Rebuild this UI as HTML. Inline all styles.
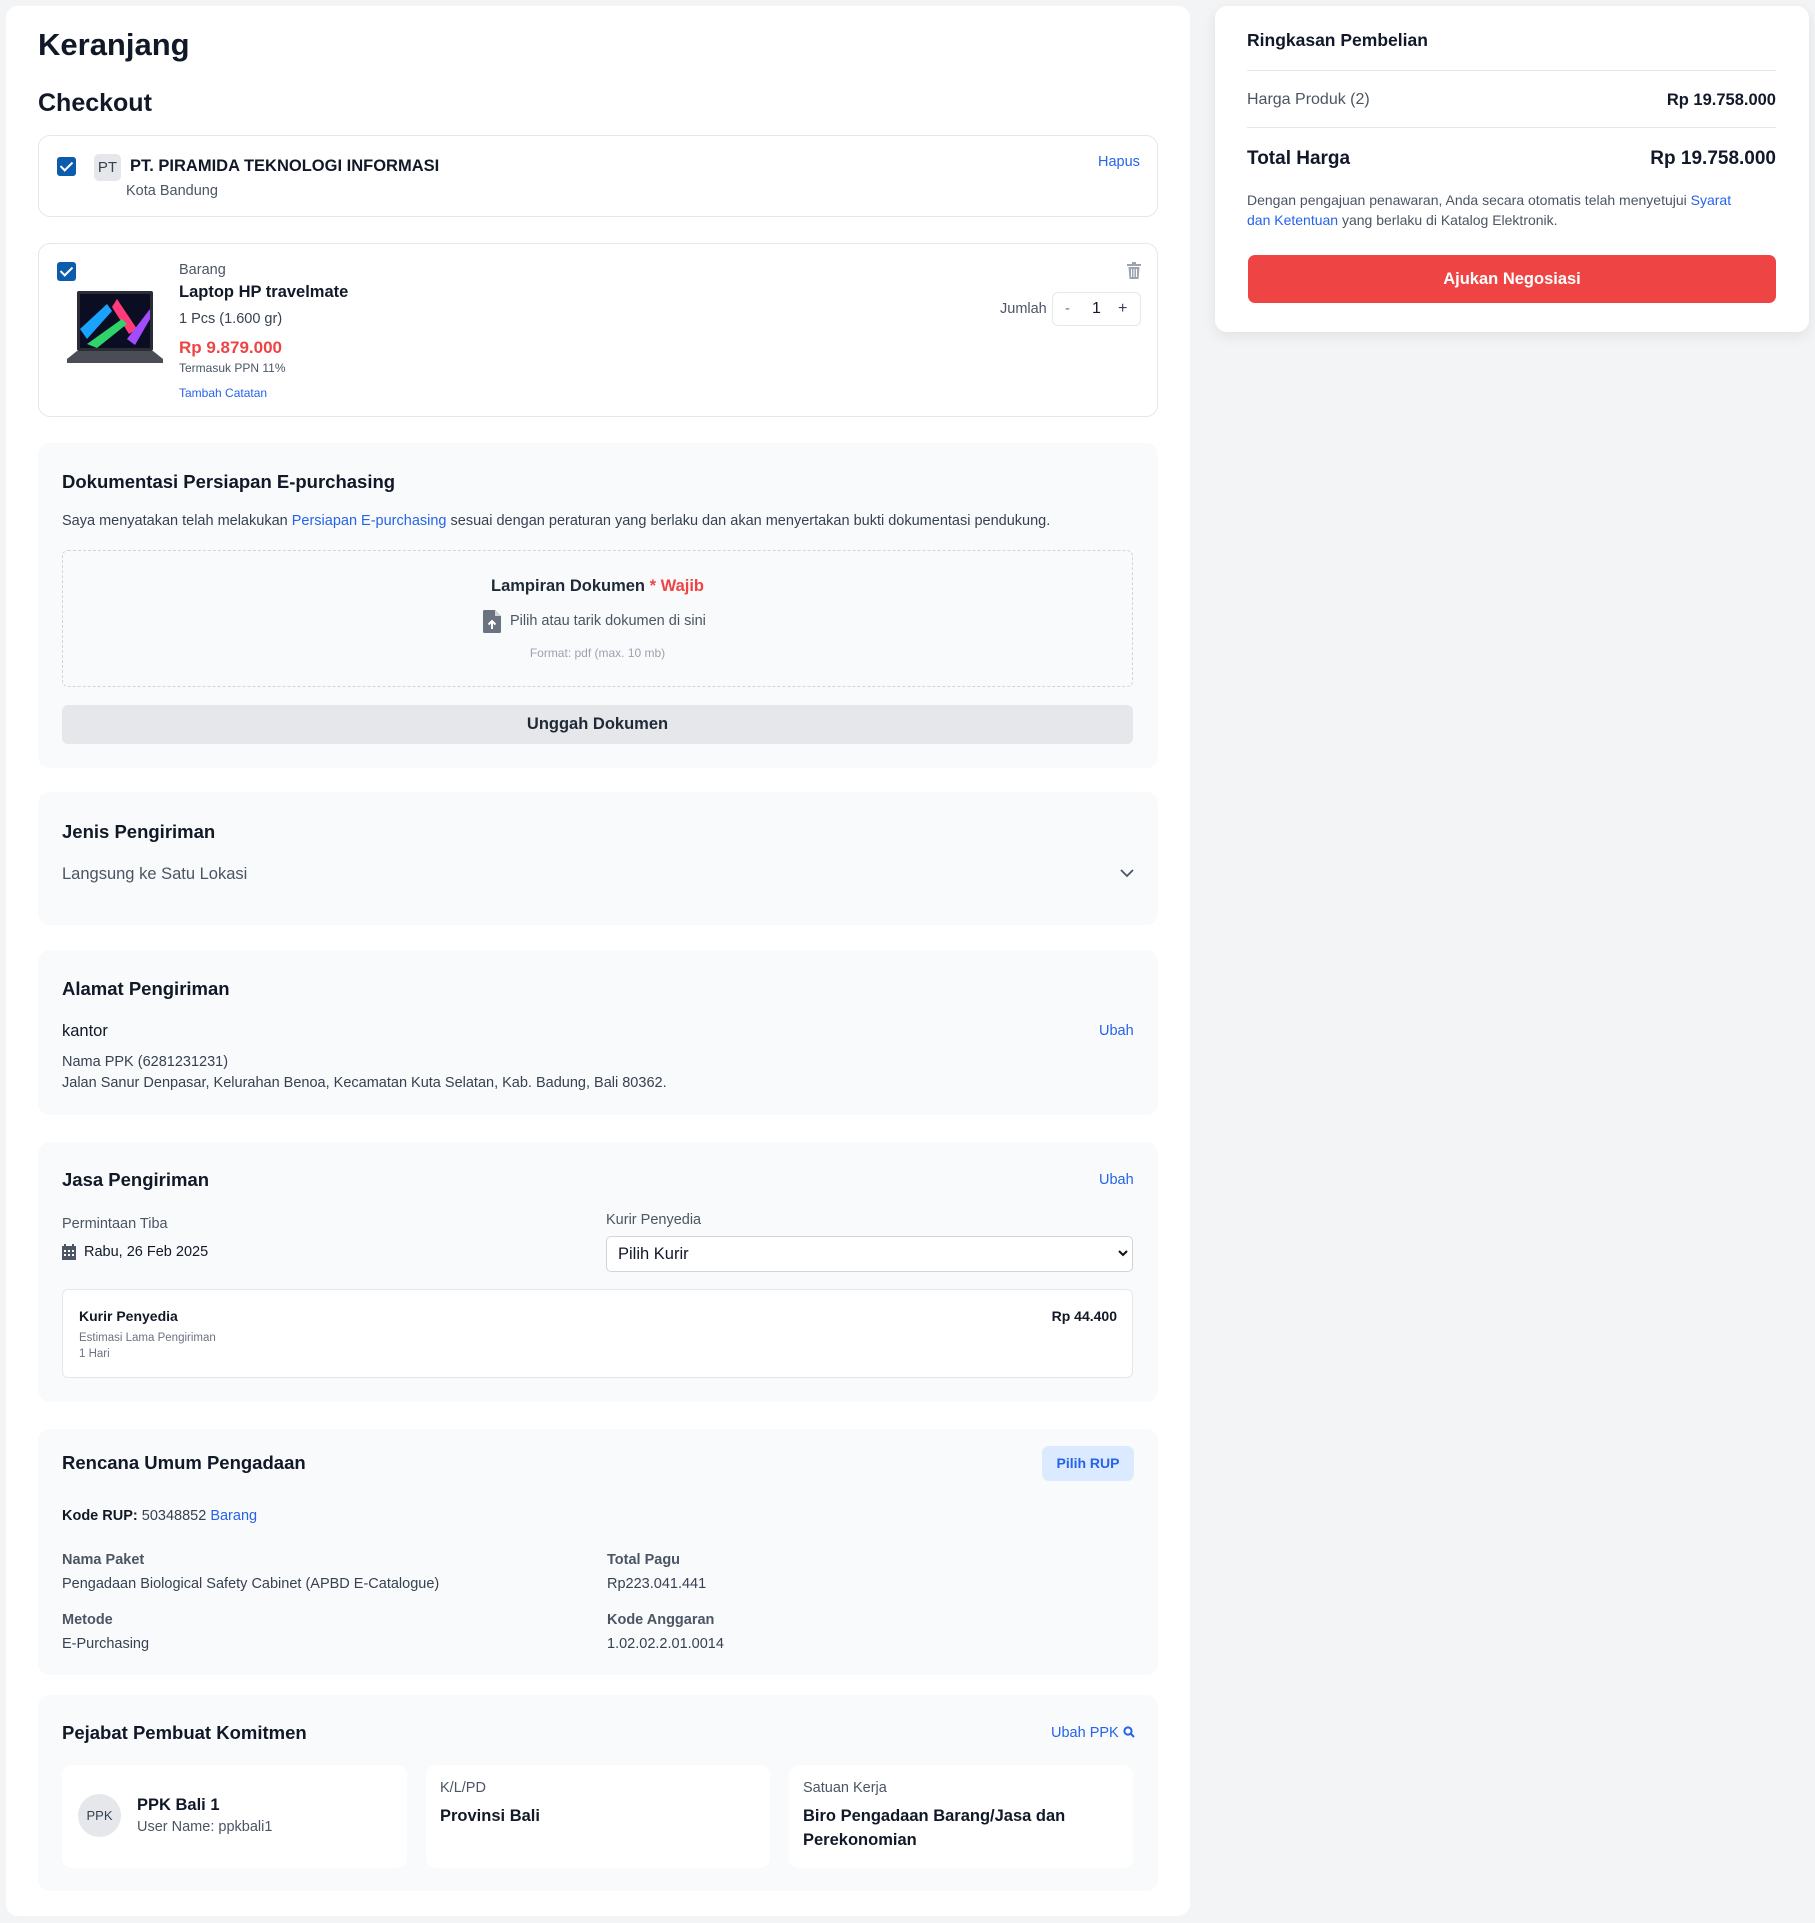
<!DOCTYPE html>
<html><head><meta charset="utf-8"><style>
*{box-sizing:border-box;margin:0;padding:0}
body{width:1815px;height:1923px;background:#f3f4f6;font-family:"Liberation Sans",sans-serif;color:#111827;position:relative;overflow:hidden}
.a{position:absolute;white-space:nowrap;line-height:20px;margin-top:1px}
.card{position:absolute;background:#fff;border-radius:12px}
.sec{position:absolute;left:38px;width:1120px;background:#f9fafb;border-radius:12px}
.bd{border:1px solid #e5e7eb}
.b{font-weight:bold}
.g{color:#4b5563}
.lg{color:#6b7280}
.blue{color:#2563eb}
.cb{position:absolute;width:19px;height:19px;background:#0b5cad;border-radius:3px}
.cb:after{content:"";position:absolute;left:6px;top:2px;width:5px;height:10px;border:solid #fff;border-width:0 2.5px 2.5px 0;transform:rotate(45deg)}
.t16{font-size:16.5px}.t15{font-size:14.5px}.t12{font-size:12px}.t18{font-size:18.5px}
</style></head><body>
<div class="card" style="left:6px;top:6px;width:1184px;height:1910px"></div>
<div class="card" style="left:1215px;top:6px;width:594px;height:326px;box-shadow:0 4px 14px rgba(0,0,0,0.08)"></div>

<div class="a b" style="left:38px;top:26px;font-size:31px;line-height:36px">Keranjang</div>
<div class="a b" style="left:38px;top:87px;font-size:25px;line-height:30px">Checkout</div>

<!-- seller -->
<div class="card bd" style="left:38px;top:135px;width:1120px;height:82px"></div>
<div class="cb" style="left:57px;top:157px"></div>
<div class="a" style="left:94px;top:153px;width:27px;height:27px;background:#e5e7eb;border-radius:5px;text-align:center;line-height:27px;font-size:15px;color:#374151">PT</div>
<div class="a b t16" style="left:130px;top:155px">PT. PIRAMIDA TEKNOLOGI INFORMASI</div>
<div class="a g" style="left:126px;top:180px;font-size:14.5px">Kota Bandung</div>
<div class="a blue t15" style="left:1098px;top:151px">Hapus</div>

<!-- product -->
<div class="card bd" style="left:38px;top:243px;width:1120px;height:174px"></div>
<div class="cb" style="left:57px;top:262px"></div>
<svg class="a" style="left:67px;top:288px" width="96" height="78" viewBox="0 0 96 78">
<rect x="10" y="2" width="76" height="60" rx="2" fill="#2a2d33"/>
<rect x="13" y="5" width="70" height="54" fill="#0b0e22"/>
<path d="M13 40 L40 15 L45 22 L20 50Z" fill="#19a3ff"/><path d="M50 10 L70 40 L62 45 L45 18Z" fill="#ff3b7a"/>
<path d="M20 55 L55 30 L60 35 L30 59Z" fill="#2fd36a"/><path d="M60 50 L83 20 L83 30 L68 56Z" fill="#a24bff"/>
<path d="M0 70 L10 62 L86 62 L96 70 L96 74 L0 74Z" fill="#4a4d55"/>
</svg>
<div class="a g" style="left:179px;top:259px;font-size:14.5px">Barang</div>
<div class="a b t16" style="left:179px;top:281px">Laptop HP travelmate</div>
<div class="a" style="left:179px;top:308px;font-size:14.5px;color:#374151">1 Pcs (1.600 gr)</div>
<div class="a b" style="left:179px;top:337px;font-size:17px;color:#ef4444">Rp 9.879.000</div>
<div class="a g t12" style="left:179px;top:357px">Termasuk PPN 11%</div>
<div class="a blue t12" style="left:179px;top:382px">Tambah Catatan</div>
<svg class="a" style="left:1127px;top:261px" width="14" height="17" viewBox="0 0 14 17"><rect x="0" y="2" width="14" height="2" fill="#9ca3af"/><rect x="5" y="0" width="4" height="2" fill="#9ca3af"/><path d="M1.5 5h11l-1 12h-9z" fill="#9ca3af"/><path d="M4.5 7v8M7 7v8M9.5 7v8" stroke="#fff" stroke-width="1"/></svg>
<div class="a g" style="left:1000px;top:298px;font-size:14.5px">Jumlah</div>
<div class="a bd" style="left:1052px;top:291px;width:89px;height:34px;border-radius:6px;background:#fff"></div>
<div class="a" style="left:1065px;top:298px;font-size:15px;color:#6b7280">-</div>
<div class="a" style="left:1092px;top:298px;font-size:16px">1</div>
<div class="a" style="left:1118px;top:298px;font-size:16px;color:#374151">+</div>

<!-- dokumentasi -->
<div class="sec" style="top:443px;height:325px"></div>
<div class="a b t18" style="left:62px;top:471px">Dokumentasi Persiapan E-purchasing</div>
<div class="a t15" style="left:62px;top:510px;color:#374151">Saya menyatakan telah melakukan <span class="blue">Persiapan E-purchasing</span> sesuai dengan peraturan yang berlaku dan akan menyertakan bukti dokumentasi pendukung.</div>
<div class="a" style="left:62px;top:549px;width:1071px;height:137px;border:1px dashed #d1d5db;border-radius:6px"></div>
<div class="a b t16" style="left:62px;top:575px;width:1071px;text-align:center;color:#1f2937">Lampiran Dokumen <span style="color:#ef4444">* Wajib</span></div>
<svg class="a" style="left:483px;top:609px" width="18" height="23" viewBox="0 0 18 23"><path d="M0 1.5Q0 0 1.5 0H12L18 6V21.5Q18 23 16.5 23H1.5Q0 23 0 21.5Z" fill="#6b7280"/><path d="M12 0V6H18" fill="#d1d5db"/><path d="M9 19V11M5.5 14.5L9 11L12.5 14.5" stroke="#fff" stroke-width="2" fill="none"/></svg>
<div class="a g" style="left:510px;top:610px;font-size:14.5px">Pilih atau tarik dokumen di sini</div>
<div class="a t12" style="left:62px;top:642px;width:1071px;text-align:center;color:#9ca3af">Format: pdf (max. 10 mb)</div>
<div class="a" style="left:62px;top:704px;width:1071px;height:39px;background:#e5e7eb;border-radius:6px"></div>
<div class="a t16" style="left:62px;top:713px;width:1071px;text-align:center;font-weight:bold;color:#1f2937">Unggah Dokumen</div>

<!-- jenis -->
<div class="sec" style="top:792px;height:133px"></div>
<div class="a b t18" style="left:62px;top:821px">Jenis Pengiriman</div>
<div class="a g t16" style="left:62px;top:863px">Langsung ke Satu Lokasi</div>
<svg class="a" style="left:1120px;top:868px" width="14" height="9" viewBox="0 0 14 9"><path d="M1 1L7 7L13 1" stroke="#4b5563" stroke-width="1.8" fill="none"/></svg>

<!-- alamat -->
<div class="sec" style="top:950px;height:165px"></div>
<div class="a b t18" style="left:62px;top:978px">Alamat Pengiriman</div>
<div class="a t16" style="left:62px;top:1020px">kantor</div>
<div class="a blue t15" style="left:1099px;top:1020px">Ubah</div>
<div class="a t15" style="left:62px;top:1051px;color:#374151">Nama PPK (6281231231)</div>
<div class="a t15" style="left:62px;top:1072px;color:#374151">Jalan Sanur Denpasar, Kelurahan Benoa, Kecamatan Kuta Selatan, Kab. Badung, Bali 80362.</div>

<!-- jasa -->
<div class="sec" style="top:1142px;height:260px"></div>
<div class="a b t18" style="left:62px;top:1169px">Jasa Pengiriman</div>
<div class="a blue t15" style="left:1099px;top:1169px">Ubah</div>
<div class="a g t15" style="left:62px;top:1213px">Permintaan Tiba</div>
<svg class="a" style="left:62px;top:1243px" width="14" height="16" viewBox="0 0 14 16"><rect x="2" y="0" width="2" height="3" fill="#4b5563"/><rect x="10" y="0" width="2" height="3" fill="#4b5563"/><rect x="0" y="2" width="14" height="14" fill="#4b5563"/><g fill="#fff"><rect x="2" y="6" width="2" height="2"/><rect x="6" y="6" width="2" height="2"/><rect x="10" y="6" width="2" height="2"/><rect x="2" y="10" width="2" height="2"/><rect x="6" y="10" width="2" height="2"/><rect x="10" y="10" width="2" height="2"/></g></svg>
<div class="a t15" style="left:84px;top:1241px">Rabu, 26 Feb 2025</div>
<div class="a g t15" style="left:606px;top:1209px">Kurir Penyedia</div>
<div class="a" style="left:606px;top:1235px;width:527px;height:36px;background:#fff;border:1px solid #d1d5db;border-radius:5px"></div>
<div class="a t16" style="left:618px;top:1243px">Pilih Kurir</div>
<svg class="a" style="left:1118px;top:1249px" width="10" height="7" viewBox="0 0 10 7"><path d="M1 1L5 5L9 1" stroke="#111" stroke-width="2" fill="none"/></svg>
<div class="a" style="left:62px;top:1288px;width:1071px;height:89px;background:#fff;border:1px solid #e5e7eb;border-radius:6px"></div>
<div class="a b" style="left:79px;top:1305px;font-size:14px">Kurir Penyedia</div>
<div class="a b" style="left:900px;width:217px;text-align:right;top:1305px;font-size:14px">Rp 44.400</div>
<div class="a lg" style="left:79px;top:1327px;font-size:11.5px">Estimasi Lama Pengiriman</div>
<div class="a lg" style="left:79px;top:1343px;font-size:11.5px">1 Hari</div>

<!-- rup -->
<div class="sec" style="top:1429px;height:246px"></div>
<div class="a b t18" style="left:62px;top:1452px">Rencana Umum Pengadaan</div>
<div class="a" style="left:1042px;top:1445px;width:92px;height:35px;background:#dbeafe;border-radius:7px;text-align:center;line-height:35px;font-size:14px;font-weight:bold;color:#2563eb">Pilih RUP</div>
<div class="a t15" style="left:62px;top:1505px;color:#374151"><b style="color:#111827">Kode RUP:</b> 50348852 <span class="blue">Barang</span></div>
<div class="a t15" style="left:62px;top:1549px;font-weight:bold;color:#4b5563">Nama Paket</div>
<div class="a t15" style="left:62px;top:1573px;color:#374151">Pengadaan Biological Safety Cabinet (APBD E-Catalogue)</div>
<div class="a t15" style="left:607px;top:1549px;font-weight:bold;color:#4b5563">Total Pagu</div>
<div class="a t15" style="left:607px;top:1573px;color:#374151">Rp223.041.441</div>
<div class="a t15" style="left:62px;top:1609px;font-weight:bold;color:#4b5563">Metode</div>
<div class="a t15" style="left:62px;top:1633px;color:#374151">E-Purchasing</div>
<div class="a t15" style="left:607px;top:1609px;font-weight:bold;color:#4b5563">Kode Anggaran</div>
<div class="a t15" style="left:607px;top:1633px;color:#374151">1.02.02.2.01.0014</div>

<!-- ppk -->
<div class="sec" style="top:1695px;height:196px"></div>
<div class="a b t18" style="left:62px;top:1722px">Pejabat Pembuat Komitmen</div>
<div class="a blue t15" style="left:1051px;top:1722px">Ubah PPK <svg width="12" height="12" viewBox="0 0 12 12" style="vertical-align:-1px"><circle cx="5" cy="5" r="3.6" stroke="#2563eb" stroke-width="2" fill="none"/><path d="M7.5 7.5L11 11" stroke="#2563eb" stroke-width="2"/></svg></div>
<div class="a" style="left:62px;top:1764px;width:345px;height:103px;background:#fff;border-radius:10px"></div>
<div class="a" style="left:426px;top:1764px;width:344px;height:103px;background:#fff;border-radius:10px"></div>
<div class="a" style="left:789px;top:1764px;width:344px;height:103px;background:#fff;border-radius:10px"></div>
<div class="a" style="left:78px;top:1793px;width:43px;height:43px;border-radius:50%;background:#e5e7eb;text-align:center;line-height:43px;font-size:13px;color:#374151">PPK</div>
<div class="a b t16" style="left:137px;top:1794px">PPK Bali 1</div>
<div class="a g t15" style="left:137px;top:1816px">User Name: ppkbali1</div>
<div class="a g t15" style="left:440px;top:1777px">K/L/PD</div>
<div class="a b t16" style="left:440px;top:1805px">Provinsi Bali</div>
<div class="a g t15" style="left:803px;top:1777px">Satuan Kerja</div>
<div class="a b t16" style="left:803px;top:1805px">Biro Pengadaan Barang/Jasa dan</div>
<div class="a b t16" style="left:803px;top:1829px">Perekonomian</div>

<!-- summary -->
<div class="a b" style="left:1247px;top:29px;font-size:17.5px">Ringkasan Pembelian</div>
<div class="a" style="left:1247px;top:69px;width:529px;height:1px;background:#e5e7eb"></div>
<div class="a g" style="left:1247px;top:89px;font-size:16px">Harga Produk (2)</div>
<div class="a b" style="left:1500px;width:276px;text-align:right;top:89px;font-size:16.5px">Rp 19.758.000</div>
<div class="a" style="left:1247px;top:126px;width:529px;height:1px;background:#e5e7eb"></div>
<div class="a b" style="left:1247px;top:147px;font-size:19px;line-height:22px">Total Harga</div>
<div class="a b" style="left:1500px;width:276px;text-align:right;top:147px;font-size:19px;line-height:22px">Rp 19.758.000</div>
<div class="a g" style="left:1247px;top:189px;font-size:14px;line-height:20px;white-space:normal;width:500px">Dengan pengajuan penawaran, Anda secara otomatis telah menyetujui <span class="blue">Syarat dan Ketentuan</span> yang berlaku di Katalog Elektronik.</div>
<div class="a" style="left:1248px;top:254px;width:528px;height:48px;background:#ef4444;border-radius:7px;text-align:center;line-height:48px;color:#fff;font-weight:bold;font-size:16.5px">Ajukan Negosiasi</div>
</body></html>
